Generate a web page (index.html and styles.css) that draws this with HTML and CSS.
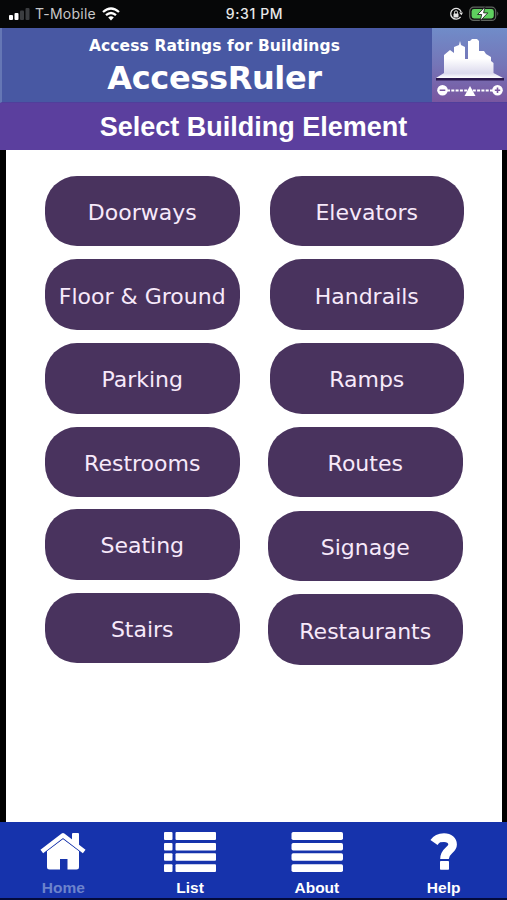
FILE: index.html
```html
<!DOCTYPE html>
<html lang="en">
<head>
  <meta charset="UTF-8" />
  <meta name="viewport" content="width=device-width, initial-scale=1" />
  <title>AccessRuler</title>
  <link rel="stylesheet" href="styles.css">
</head>
<body>
  <div class="app">
    <div class="status-bar">
      <div class="status-left">
        <svg class="signal" width="22" height="14" viewBox="0 0 22 14">
          <rect x="0" y="8" width="4" height="5" rx="1" fill="#fff" />
          <rect x="5.5" y="6" width="4" height="7" rx="1" fill="#fff" />
          <rect x="11" y="3.5" width="4" height="9.5" rx="1" fill="#3b3d40" />
          <rect x="16.5" y="1" width="4" height="12" rx="1" fill="#3b3d40" />
        </svg>
        <span class="carrier">T-Mobile</span>
        <svg class="wifi" width="18" height="14" viewBox="0 0 18 14">
          <g fill="none" stroke="#fff" stroke-width="2.3">
            <path d="M1 5 Q9 -2 17 5" />
            <path d="M4 8.2 Q9 3.8 14 8.2" />
          </g>
          <path d="M9 13.4 L6.2 10.5 Q9 8 11.8 10.5 Z" fill="#fff" />
        </svg>
      </div>
      <span class="clock">9:31 PM</span>
      <div class="status-right">
        <svg width="14" height="14" viewBox="0 0 14 14">
          <path d="M12.2 5 A5.4 5.4 0 1 0 11.6 9.8" fill="none" stroke="#e4e4e4" stroke-width="1.3" />
          <path d="M10 5.6 L14 5.6 L12.4 8.3 Z" fill="#e4e4e4" />
          <rect x="4.5" y="6.4" width="5" height="4" rx=".6" fill="#e4e4e4" />
          <path d="M5.5 6.8 V5.3 a1.5 1.5 0 0 1 3 0 V6.8" fill="none" stroke="#e4e4e4" stroke-width="1" />
        </svg>
        <svg width="31" height="16" viewBox="0 0 31 16">
          <rect x=".7" y="1.2" width="26" height="13.2" rx="4" fill="#111" stroke="#606660" stroke-width="1.2" />
          <rect x="2.6" y="3.1" width="22.2" height="9.4" rx="2.4" fill="#5fd05f" />
          <path d="M28.3 5.6 Q30.3 7.8 28.3 10 Z" fill="#606660" />
          <path d="M16 .8 L8.6 8.5 H12.7 L11.2 15 L18.8 6.9 H14.6 Z" fill="#fff" stroke="#111" stroke-width=".8" />
        </svg>
      </div>
    </div>

    <header class="header">
      <div class="brand">
        <span class="tagline">Access Ratings for Buildings</span>
        <span class="name">AccessRuler</span>
      </div>
      <svg class="logo" width="75" height="74" viewBox="0 0 75 74">
        <defs>
          <linearGradient id="sky" x1="0" y1="0" x2="0" y2="1">
            <stop offset="0" stop-color="#708cc9" />
            <stop offset=".5" stop-color="#7575b7" />
            <stop offset="1" stop-color="#7956a0" />
          </linearGradient>
          <linearGradient id="city" x1="0" y1="0" x2="0" y2="1">
            <stop offset="0" stop-color="#fff" />
            <stop offset=".5" stop-color="#fff" />
            <stop offset=".88" stop-color="#dcdaed" />
            <stop offset="1" stop-color="#fff" />
          </linearGradient>
        </defs>
        <rect width="75" height="74" fill="url(#sky)" />
        <path d="M4 50 L12 45 V27 L18 22 L22 25 V19 L27 17 L28 13 L29 17 L33 19 V31 H36 V13 H38 L40 11 H45 L47 13 V23 L52 23 L54 26 L59 29 V33 L61.5 35 V45 L71 50 Z" fill="url(#city)" />
        <rect x="4" y="50" width="68" height="2.5" fill="#2a174c" />
        <path d="M15 62.5 H61" stroke="#fff" stroke-width="1.8" stroke-dasharray="3 1.3" />
        <path d="M38 58 L43.5 68 H32.5 Z" fill="#fff" />
        <circle cx="10.5" cy="62.2" r="5.3" fill="#fff" />
        <circle cx="65.5" cy="62.2" r="5.3" fill="#fff" />
        <path d="M7.7 62.2 H13.3 M62.8 62.2 H68.2 M65.5 59.5 V64.9" stroke="#7956a0" stroke-width="1.6" />
      </svg>
    </header>
    <h1 class="page-title">Select Building Element</h1>

    <main class="content">
      <div class="column">
        <button class="element-btn">Doorways</button>
        <button class="element-btn">Floor &amp; Ground</button>
        <button class="element-btn">Parking</button>
        <button class="element-btn">Restrooms</button>
        <button class="element-btn tight">Seating</button>
        <button class="element-btn">Stairs</button>
      </div>
      <div class="column">
        <button class="element-btn">Elevators</button>
        <button class="element-btn">Handrails</button>
        <button class="element-btn">Ramps</button>
        <button class="element-btn shifted">Routes</button>
        <button class="element-btn shifted">Signage</button>
        <button class="element-btn shifted">Restaurants</button>
      </div>
    </main>

    <nav class="tab-bar">
      <a class="tab active">
        <svg width="52" height="42" viewBox="0 0 52 42">
          <path d="M10 20 L26 8 L42 20 V36 Q42 38.5 39.5 38.5 H30.5 V28 H23 V38.5 H12.5 Q10 38.5 10 36 Z" fill="#fff" />
          <path d="M3 21.5 L26 4 L49 21.5" fill="none" stroke="#1633ac" stroke-width="6" />
          <path d="M35 10 V3 Q35 2 36 2 H41 Q42 2 42 3 V16 Z" fill="#fff" />
          <path d="M4.8 20.5 L26 4.2 L47.2 20.5" fill="none" stroke="#fff" stroke-width="4.4" stroke-linejoin="round" />
        </svg>
        <span>Home</span>
      </a>
      <a class="tab">
        <svg width="52" height="42" viewBox="0 0 52 42" fill="#fff">
          <rect x="0" y="1" width="8.5" height="8" rx="1" />
          <rect x="11.5" y="1" width="40.5" height="8" rx="1" />
          <rect x="0" y="12" width="8.5" height="7.5" rx="1" />
          <rect x="11.5" y="12" width="40.5" height="7.5" rx="1" />
          <rect x="0" y="22.3" width="8.5" height="7.5" rx="1" />
          <rect x="11.5" y="22.3" width="40.5" height="7.5" rx="1" />
          <rect x="0" y="33.3" width="8.5" height="7.7" rx="1" />
          <rect x="11.5" y="33.3" width="40.5" height="7.7" rx="1" />
        </svg>
        <span>List</span>
      </a>
      <a class="tab">
        <svg width="52" height="42" viewBox="0 0 52 42" fill="#fff">
          <rect x=".5" y="1" width="51.5" height="8" rx="1.7" />
          <rect x=".5" y="12" width="51.5" height="7.5" rx="1.7" />
          <rect x=".5" y="22.3" width="51.5" height="7.5" rx="1.7" />
          <rect x=".5" y="33.3" width="51.5" height="7.7" rx="1.7" />
        </svg>
        <span>About</span>
      </a>
      <a class="tab">
        <svg width="52" height="42" viewBox="0 0 52 42">
          <path d="M16 11.5 C19 7 22 6.6 26 6.6 C31.5 6.6 34.6 9.4 34.6 13.5 C34.6 19.5 26.5 19.5 26.5 28" fill="none" stroke="#fff" stroke-width="8.6" />
          <rect x="22" y="30" width="9" height="8.8" rx=".8" fill="#fff" />
        </svg>
        <span>Help</span>
      </a>
    </nav>
  </div>
</body>
</html>
```

FILE: styles.css
```css
* {
  box-sizing: border-box;
}

body {
  margin: 0;
  background-color: #000;
  font-family: "Liberation Sans", Arial, sans-serif;
}

.app {
  width: 507px;
  height: 900px;
  display: flex;
  flex-direction: column;
  overflow: hidden;
}

/* Status bar */
.status-bar {
  height: 28px;
  flex: none;
  display: grid;
  grid-template-columns: 1fr auto 1fr;
  align-items: center;
  padding: 0 7px 0 9px;
  background-color: #060708;
  color: #e8e8e8;
  font-family: Inter, sans-serif;
  font-size: 14px;
  line-height: 26px;
}

.status-left,
.status-right {
  display: flex;
  align-items: center;
}

.status-right {
  justify-content: flex-end;
  gap: 6px;
}

.signal {
  margin-right: 4px;
}

.carrier {
  letter-spacing: 0.25px;
  color: #c8c8c8;
}

.wifi {
  margin-left: 6px;
}

.clock {
  font-weight: 500;
  letter-spacing: 0.6px;
}

/* Header */
.header {
  height: 75px;
  flex: none;
  display: flex;
  background-color: #4858a3;
  border-left: 2px solid #6577b5;
  border-bottom: 1px solid #503f9b;
}

.brand {
  flex: 1;
  display: flex;
  flex-direction: column;
  align-items: center;
  padding: 8px 5px 0 0;
  color: #fff;
  font-family: "DejaVu Sans", Verdana, sans-serif;
  font-weight: bold;
}

.tagline {
  font-size: 15.5px;
  line-height: 20px;
  letter-spacing: 0.1px;
}

.name {
  font-size: 32px;
  line-height: 45px;
  letter-spacing: -0.35px;
}

.page-title {
  height: 47px;
  flex: none;
  margin: 0;
  background-color: #5b3f9e;
  color: #fff;
  font-size: 27px;
  line-height: 48px;
  text-align: center;
}

/* Element buttons */
.content {
  flex: 1;
  display: flex;
  gap: 30px;
  margin: 0 5px 0 6px;
  padding: 25.5px 0 0 39px;
  background-color: #fff;
}

.column {
  display: flex;
  flex-direction: column;
  gap: 13.3px;
}

.element-btn {
  width: 194.5px;
  height: 70.5px;
  flex: none;
  padding: 3px 0 0;
  border: none;
  border-radius: 32px;
  background-color: #49335e;
  color: #f7e9fa;
  font-family: "DejaVu Sans", Verdana, sans-serif;
  font-size: 22px;
  white-space: nowrap;
  cursor: pointer;
}

.element-btn.tight {
  margin-top: -1.5px;
}

.element-btn.shifted {
  margin-left: -1.5px;
}

/* Bottom tabs */
.tab-bar {
  height: 78px;
  flex: none;
  display: grid;
  grid-template-columns: repeat(4, 1fr);
  background-color: #1633ac;
  border-bottom: 2px solid #030b3c;
}

.tab {
  display: flex;
  flex-direction: column;
  align-items: center;
  padding-top: 9px;
  color: #fff;
  font-size: 15.5px;
  font-weight: bold;
  line-height: 18px;
  cursor: pointer;
}

.tab span {
  margin-top: 6px;
}

.tab.active {
  color: #6c83cc;
}
```
